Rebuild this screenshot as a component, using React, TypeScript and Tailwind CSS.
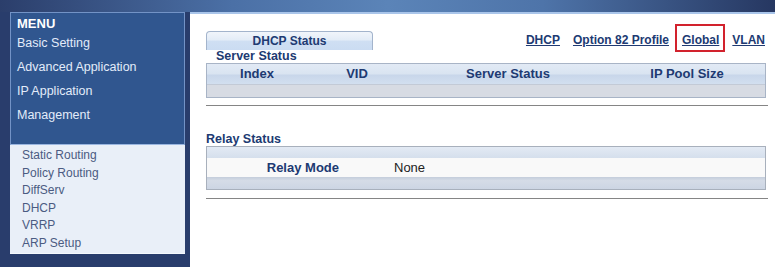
import React from "react";

const menu = ["Basic Setting", "Advanced Application", "IP Application", "Management"];
const subMenu = ["Static Routing", "Policy Routing", "DiffServ", "DHCP", "VRRP", "ARP Setup"];

const Sidebar = () => (
  <aside className="w-[190px] pl-[10px] pr-[5px] pb-[13px] flex flex-col">
    <div className="h-[133px] bg-[#30568f] border border-[#7393c6] border-b-[#9ab6e0] pl-[6px] pt-[3px] text-[#e3ecfa]">
      <p className="text-[13px] leading-[15px] font-bold text-white">MENU</p>
      {menu.map((m) => (
        <p key={m} className="text-[12.5px] leading-[24px]">
          {m}
        </p>
      ))}
    </div>
    <div className="flex-1 bg-[#e9eff8] border-b border-[#f4f8fd] pl-[12px] pt-[2px] text-[#4b5b82]">
      {subMenu.map((m) => (
        <p key={m} className="text-[12px] leading-[17.6px]">
          {m}
        </p>
      ))}
    </div>
  </aside>
);

const NavLinks = () => (
  <div className="flex gap-[13px] pr-[3px] text-[12px] font-bold leading-[19px] text-[#203a72] underline">
    <span>DHCP</span>
    <span>Option 82 Profile</span>
    <span className="relative">
      Global
      <span className="absolute -left-[7px] -right-[6px] -top-[7px] -bottom-[2px] border-2 border-[#d2222d]" />
    </span>
    <span>VLAN</span>
  </div>
);

const cols = [
  { name: "Index", w: "w-[100px]" },
  { name: "VID", w: "w-[100px]" },
  { name: "Server Status", w: "w-[202px]" },
  { name: "IP Pool Size", w: "flex-1" },
];

export default function App() {
  return (
    <div className="w-[775px] h-[267px] bg-[#293d6c] flex flex-col overflow-hidden font-['Liberation_Sans',Arial,sans-serif]">
      <div className="h-[12px] shrink-0 bg-[linear-gradient(to_right,#2b3e6b,#4b70a6_30%,#5b84b8_50%,#4e74a9_70%,#263761)]" />
      <div className="flex flex-1">
        <Sidebar />
        <main className="flex-1 bg-white border-t-2 border-[#a9c5ea] pl-[16px] pr-[7px]">
          <div className="mt-[17px] h-[19px] flex justify-between">
            <div className="w-[167px] h-[19px] rounded-t-[4px] border border-b-0 border-[#a3b4cc] bg-[linear-gradient(#f1f5fb,#e3ecf7_45%,#cfdff3_50%,#cbdcf2)] text-center text-[12px] leading-[18px] font-bold text-[#203a72]">
              DHCP Status
            </div>
            <NavLinks />
          </div>

          <p className="pl-[10px] text-[12.5px] leading-[13px] font-bold text-[#203a72]">Server Status</p>
          <div className="mr-[2px] border border-[#a8b4c6]">
            <div className="h-[20px] flex bg-[linear-gradient(#e2eaf5,#d9e4f1_50%,#c8d6ea_55%,#d2dfef)] text-[13px] leading-[20px] font-bold text-[#203a72]">
              {cols.map((c) => (
                <div key={c.name} className={`${c.w} text-center`}>
                  {c.name}
                </div>
              ))}
            </div>
            <div className="h-[13px] bg-[#d7dbe3] border-t border-[#c3cad6]" />
          </div>
          <div className="mt-[7px] border-t border-[#858585]" />

          <p className="mt-[27px] text-[12.5px] leading-[13px] font-bold text-[#203a72]">Relay Status</p>
          <div className="mr-[2px] border border-[#a8b0bc]">
            <div className="h-[11px] bg-[linear-gradient(#e3eaf4,#d5dfec)]" />
            <div className="h-[19px] flex bg-[#f9f9f9] text-[13px] leading-[19px]">
              <div className="w-[132px] text-right font-bold text-[#203a72]">Relay Mode</div>
              <div className="pl-[55px] text-[#222222]">None</div>
            </div>
            <div className="h-[12px] bg-[linear-gradient(#c4cddb,#d5dce7_30%,#ccd5e3)]" />
          </div>
          <div className="mt-[8px] border-t border-[#858585]" />
        </main>
      </div>
    </div>
  );
}
